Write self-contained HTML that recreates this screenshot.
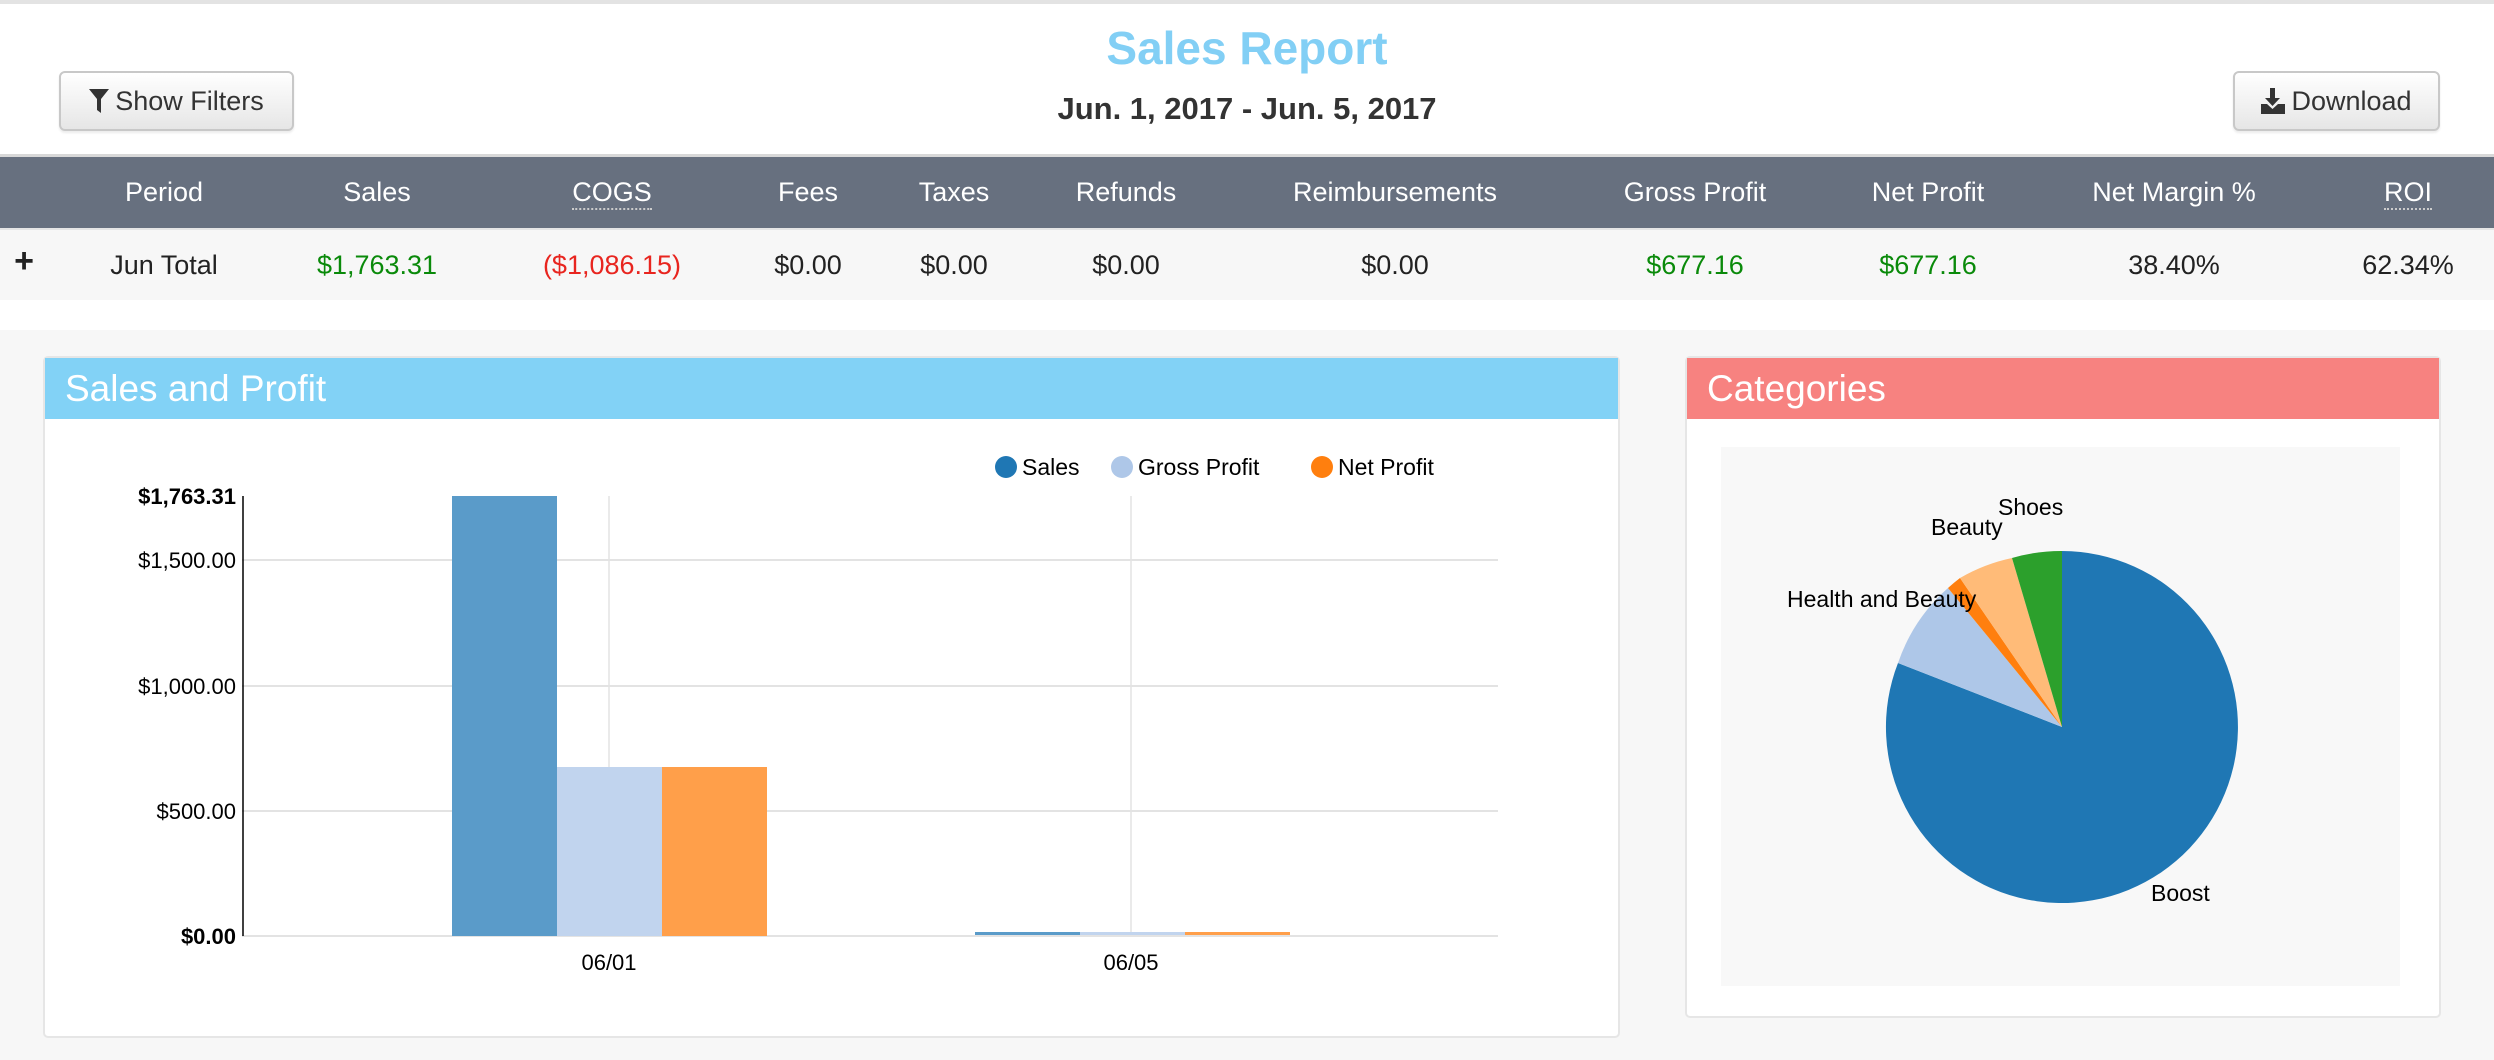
<!DOCTYPE html>
<html><head><meta charset="utf-8"><style>
*{margin:0;padding:0;box-sizing:border-box}
body{width:2494px;height:1060px;background:#f7f7f7;font-family:"Liberation Sans",sans-serif;position:relative;overflow:hidden}
.top{position:absolute;left:0;top:0;width:2494px;height:330px;background:#fff;border-top:4px solid #e3e3e3}
.abs{position:absolute}
.btn{position:absolute;top:67px;height:60px;border:2px solid #c8c8c8;border-radius:6px;background:linear-gradient(#fff,#e6e6e6);font-size:27px;color:#333;display:flex;align-items:center;justify-content:center;box-shadow:0 2px 2px rgba(0,0,0,.08)}
.hdr{position:absolute;left:0;top:154px;width:2494px;height:74px;background:#67707f;border-top:3px solid #d8d8d8}
.row{position:absolute;left:0;top:228px;width:2494px;height:72px;background:#f7f7f7;border-top:2px solid #e5e5e5}
.c{position:absolute;transform:translateX(-50%);white-space:nowrap;font-size:27px}
.hdr .c{top:20px;color:#fff}
.row .c{top:20px;color:#222}
.u{border-bottom:2px dotted #ccc}
.row .g{color:#0a8a0a}.row .r{color:#e8251f}
.panel{position:absolute;top:356px;background:#fff;border:2px solid #e6e6e6;border-radius:5px}
.ph{height:61px;color:#fff;font-size:37px;padding:10px 0 0 20px}
</style></head><body>
<div class="top">
<div class="abs" style="left:0;width:2494px;top:17px;text-align:center;font-size:46px;font-weight:bold;color:#82cff5">Sales Report</div>
<div class="abs" style="left:0;width:2494px;top:87px;text-align:center;font-size:31px;font-weight:bold;color:#333">Jun. 1, 2017 - Jun. 5, 2017</div>
<div class="btn" style="left:59px;width:235px"><svg width="20" height="24" viewBox="0 0 20 24" style="margin-right:6px"><path d="M0 0H20L12 10V24L8 21V10Z" fill="#333"/></svg>Show Filters</div>
<div class="btn" style="left:2233px;width:207px"><svg width="24" height="26" viewBox="0 0 24 26" style="margin-right:6px"><path d="M9 0H14V10H19L11.5 18L4 10H9Z M0 16H6L11.5 21L17 16H24V26H0Z" fill="#333"/></svg>Download</div>
</div>
<div class="hdr">
<span class="c" style="left:164px">Period</span><span class="c" style="left:377px">Sales</span><span class="c u" style="left:612px">COGS</span><span class="c" style="left:808px">Fees</span><span class="c" style="left:954px">Taxes</span><span class="c" style="left:1126px">Refunds</span><span class="c" style="left:1395px">Reimbursements</span><span class="c" style="left:1695px">Gross Profit</span><span class="c" style="left:1928px">Net Profit</span><span class="c" style="left:2174px">Net Margin %</span><span class="c u" style="left:2408px">ROI</span>
</div>
<div class="row">
<span class="c" style="left:24px;font-weight:bold;font-size:34px;top:12px">+</span>
<span class="c" style="left:164px">Jun Total</span><span class="c g" style="left:377px">$1,763.31</span><span class="c r" style="left:612px">($1,086.15)</span><span class="c" style="left:808px">$0.00</span><span class="c" style="left:954px">$0.00</span><span class="c" style="left:1126px">$0.00</span><span class="c" style="left:1395px">$0.00</span><span class="c g" style="left:1695px">$677.16</span><span class="c g" style="left:1928px">$677.16</span><span class="c" style="left:2174px">38.40%</span><span class="c" style="left:2408px">62.34%</span>
</div>

<div class="panel" style="left:43px;width:1577px;height:682px"><div class="ph" style="background:#82d2f6">Sales and Profit</div></div>
<div class="panel" style="left:1685px;width:756px;height:662px"><div class="ph" style="background:#f78280">Categories</div></div>

<svg class="abs" style="left:0;top:0" width="2494" height="1060" font-family="Liberation Sans, sans-serif">
<g stroke="#e3e3e3" stroke-width="2">
<line x1="242" y1="560" x2="1498" y2="560"/><line x1="242" y1="686" x2="1498" y2="686"/><line x1="242" y1="811" x2="1498" y2="811"/><line x1="242" y1="936" x2="1498" y2="936"/>
<line x1="609" y1="496" x2="609" y2="936" stroke-width="1.5"/><line x1="1131" y1="496" x2="1131" y2="936" stroke-width="1.5"/>
</g>
<line x1="243" y1="496" x2="243" y2="936" stroke="#000" stroke-width="1.5"/>
<rect x="452" y="496" width="105" height="440" fill="#5a9bc9"/>
<rect x="557" y="767" width="105" height="169" fill="#c1d4ee"/>
<rect x="662" y="767" width="105" height="169" fill="#ff9f4a"/>
<rect x="975" y="932" width="105" height="3" fill="#5a9bc9"/>
<rect x="1080" y="932" width="105" height="3" fill="#c1d4ee"/>
<rect x="1185" y="932" width="105" height="3" fill="#ff9f4a"/>
<g font-size="22" text-anchor="end" fill="#000">
<text x="236" y="504" font-weight="bold">$1,763.31</text>
<text x="236" y="568">$1,500.00</text><text x="236" y="694">$1,000.00</text><text x="236" y="819">$500.00</text>
<text x="236" y="944" font-weight="bold">$0.00</text>
</g>
<g font-size="22" text-anchor="middle"><text x="609" y="970">06/01</text><text x="1131" y="970">06/05</text></g>
<g font-size="23">
<circle cx="1006" cy="467" r="11" fill="#1f77b4"/><text x="1022" y="475">Sales</text>
<circle cx="1122" cy="467" r="11" fill="#aec7e8"/><text x="1138" y="475">Gross Profit</text>
<circle cx="1322" cy="467" r="11" fill="#ff7f0e"/><text x="1338" y="475">Net Profit</text>
</g>
<rect x="1721" y="447" width="679" height="539" fill="#f8f8f8"/>
<path d="M2062 727V551A176 176 0 1 1 1898 663Z" fill="#1f77b4"/>
<path d="M2062 727L1898 663A176 176 0 0 1 1948 588Z" fill="#aec7e8"/>
<path d="M2062 727L1948 588A176 176 0 0 1 1960 578Z" fill="#ff7f0e"/>
<path d="M2062 727L1960 578A176 176 0 0 1 2012 558Z" fill="#ffbb78"/>
<path d="M2062 727L2012 558A176 176 0 0 1 2062 551Z" fill="#2ca02c"/>
<g font-size="23" fill="#000">
<text x="1998" y="515">Shoes</text><text x="1931" y="535">Beauty</text>
<text x="1787" y="607">Health and Beauty</text><text x="2151" y="901">Boost</text>
</g>
</svg>
</body></html>
